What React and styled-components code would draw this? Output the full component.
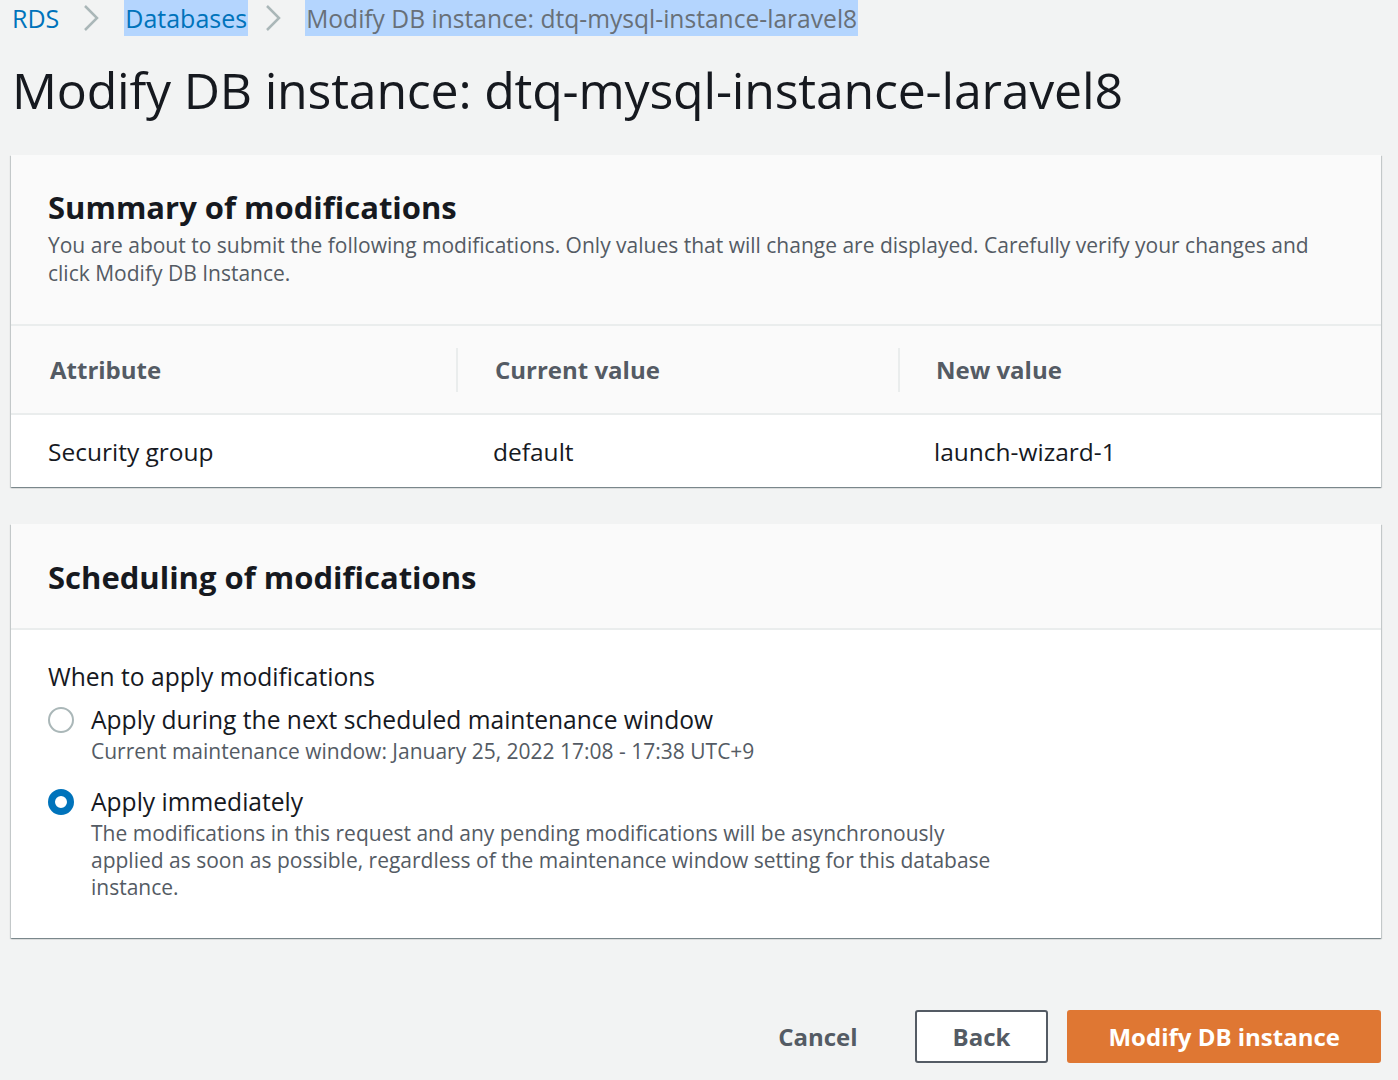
import React from "react";
import styled, { createGlobalStyle } from "styled-components";

const GlobalStyle = createGlobalStyle`
    body {
        margin: 0;
        background: #f2f3f3;
        font-family: "Open Sans", "Noto Sans", sans-serif;
        color: #16191f;
    }
`;

const Page = styled.div`
    padding: 0 17px 0 11px;
`;

const Crumbs = styled.nav`
    display: flex;
    align-items: center;
    height: 36px;
    font-size: 25px;
`;

const Crumb = styled.span`
    display: inline-flex;
    align-items: center;
    height: 36px;
    padding: 0 ${(p) => (p.$selected ? "1px" : "0")};
    margin-left: ${(p) => (p.$first ? "1px" : "0")};
    font-size: ${(p) => (p.$current ? "24.6px" : "inherit")};
    color: ${(p) => (p.$current ? "#687078" : "#0073bb")};
    background: ${(p) => (p.$selected ? "#b4d5fe" : "transparent")};
`;

const Sep = styled.span`
    display: inline-flex;
    align-items: center;
    margin: ${(p) => p.$m};
`;

const Title = styled.h1`
    margin: 22px 0 0 1px;
    font-size: 50px;
    font-weight: 400;
    line-height: 64px;
    letter-spacing: -0.2px;
`;

const Card = styled.section`
    margin-top: ${(p) => p.$top || 0}px;
    background: #fff;
    box-shadow: 0 1px 1px 0 rgba(0, 28, 36, 0.3),
        1px 1px 1px 0 rgba(0, 28, 36, 0.15),
        -1px 1px 1px 0 rgba(0, 28, 36, 0.15);
`;

const CardHeader = styled.header`
    background: #fafafa;
    border-bottom: 2px solid #eaeded;
    padding: ${(p) => p.$pad};
`;

const CardTitle = styled.h2`
    margin: 0;
    font-size: 31px;
    font-weight: 700;
    line-height: 40px;
`;

const CardDesc = styled.p`
    margin: 4px 0 0;
    font-size: 21px;
    line-height: 28px;
    color: #545b64;
`;

const Table = styled.div`
    display: grid;
    grid-template-columns: 447px 442px 1fr;
`;

const HeadCell = styled.div`
    display: flex;
    align-items: center;
    height: 87px;
    background: #fafafa;
    border-bottom: 2px solid #eaeded;
    padding-left: ${(p) => p.$pl}px;
`;

const HeadLabel = styled.span`
    display: flex;
    align-items: center;
    height: 44px;
    flex: 1;
    font-size: 24px;
    font-weight: 700;
    color: #545b64;
    border-right: ${(p) => (p.$divider ? "2px solid #eaeded" : "none")};
`;

const BodyCell = styled.div`
    display: flex;
    align-items: center;
    height: 72px;
    padding-left: ${(p) => p.$pl}px;
    font-size: 24.5px;
`;

const FormBody = styled.div`
    padding: 32px 37px 37px;
`;

const FieldLabel = styled.div`
    font-size: 24.6px;
    line-height: 30px;
`;

const Option = styled.label`
    display: flex;
    gap: 17px;
    margin-top: ${(p) => p.$top}px;
`;

const Radio = styled.span`
    flex: none;
    box-sizing: border-box;
    width: 26px;
    height: 26px;
    margin-top: 2px;
    border-radius: 50%;
    border: ${(p) => (p.$checked ? "7px solid #0073bb" : "2px solid #aab7b8")};
    background: #fff;
`;

const OptionText = styled.div`
    display: flex;
    flex-direction: column;
`;

const OptionLabel = styled.span`
    font-size: 24.6px;
    line-height: 30px;
`;

const OptionDesc = styled.span`
    max-width: 905px;
    margin-top: 3px;
    font-size: 21px;
    line-height: 27px;
    color: #545b64;
`;

const Actions = styled.div`
    display: flex;
    justify-content: flex-end;
    align-items: center;
    gap: 19px;
    margin-top: 72px;
`;

const Button = styled.button`
    box-sizing: border-box;
    height: 53px;
    padding: ${(p) => p.$pad};
    font-family: inherit;
    font-size: 24px;
    font-weight: 700;
    border-radius: 3px;
    cursor: pointer;
    color: ${(p) => (p.$variant === "primary" ? "#fff" : "#545b64")};
    background: ${(p) =>
        p.$variant === "primary" ? "#df7733" : p.$variant === "normal" ? "#fff" : "transparent"};
    border: 2px solid
        ${(p) =>
            p.$variant === "primary" ? "#df7733" : p.$variant === "normal" ? "#545b64" : "transparent"};
`;

const Chevron = () => (
    <svg width="16" height="28" viewBox="0 0 16 28">
        <path d="M2 2 L14 14 L2 26" fill="none" stroke="#aab7b8" strokeWidth="2.5" />
    </svg>
);

const App = () => {
    return (
        <Page>
            <GlobalStyle />
            <Crumbs>
                <Crumb $first>RDS</Crumb>
                <Sep $m="0 25px 0 24px"><Chevron /></Sep>
                <Crumb $selected>Databases</Crumb>
                <Sep $m="0 24px 0 17px"><Chevron /></Sep>
                <Crumb $selected $current>Modify DB instance: dtq-mysql-instance-laravel8</Crumb>
            </Crumbs>
            <Title>Modify DB instance: dtq-mysql-instance-laravel8</Title>

            <Card $top={33}>
                <CardHeader $pad="32px 37px 37px">
                    <CardTitle>Summary of modifications</CardTitle>
                    <CardDesc>
                        You are about to submit the following modifications. Only values that will change
                        are displayed. Carefully verify your changes and click Modify DB Instance.
                    </CardDesc>
                </CardHeader>
                <Table>
                    <HeadCell $pl={39}><HeadLabel $divider>Attribute</HeadLabel></HeadCell>
                    <HeadCell $pl={37}><HeadLabel $divider>Current value</HeadLabel></HeadCell>
                    <HeadCell $pl={36}><HeadLabel>New value</HeadLabel></HeadCell>
                    <BodyCell $pl={37}>Security group</BodyCell>
                    <BodyCell $pl={35}>default</BodyCell>
                    <BodyCell $pl={34}>launch-wizard-1</BodyCell>
                </Table>
            </Card>

            <Card $top={37}>
                <CardHeader $pad="33px 37px 31px">
                    <CardTitle>Scheduling of modifications</CardTitle>
                </CardHeader>
                <FormBody>
                    <FieldLabel>When to apply modifications</FieldLabel>
                    <Option $top={13}>
                        <Radio />
                        <OptionText>
                            <OptionLabel>Apply during the next scheduled maintenance window</OptionLabel>
                            <OptionDesc>Current maintenance window: January 25, 2022 17:08 - 17:38 UTC+9</OptionDesc>
                        </OptionText>
                    </Option>
                    <Option $top={22}>
                        <Radio $checked />
                        <OptionText>
                            <OptionLabel>Apply immediately</OptionLabel>
                            <OptionDesc>
                                The modifications in this request and any pending modifications will be
                                asynchronously applied as soon as possible, regardless of the maintenance
                                window setting for this database instance.
                            </OptionDesc>
                        </OptionText>
                    </Option>
                </FormBody>
            </Card>

            <Actions>
                <Button $pad="0 36px 0 18px">Cancel</Button>
                <Button $variant="normal" $pad="0 36px">Back</Button>
                <Button $variant="primary" $pad="0 39px">Modify DB instance</Button>
            </Actions>
        </Page>
    );
};

export default App;
